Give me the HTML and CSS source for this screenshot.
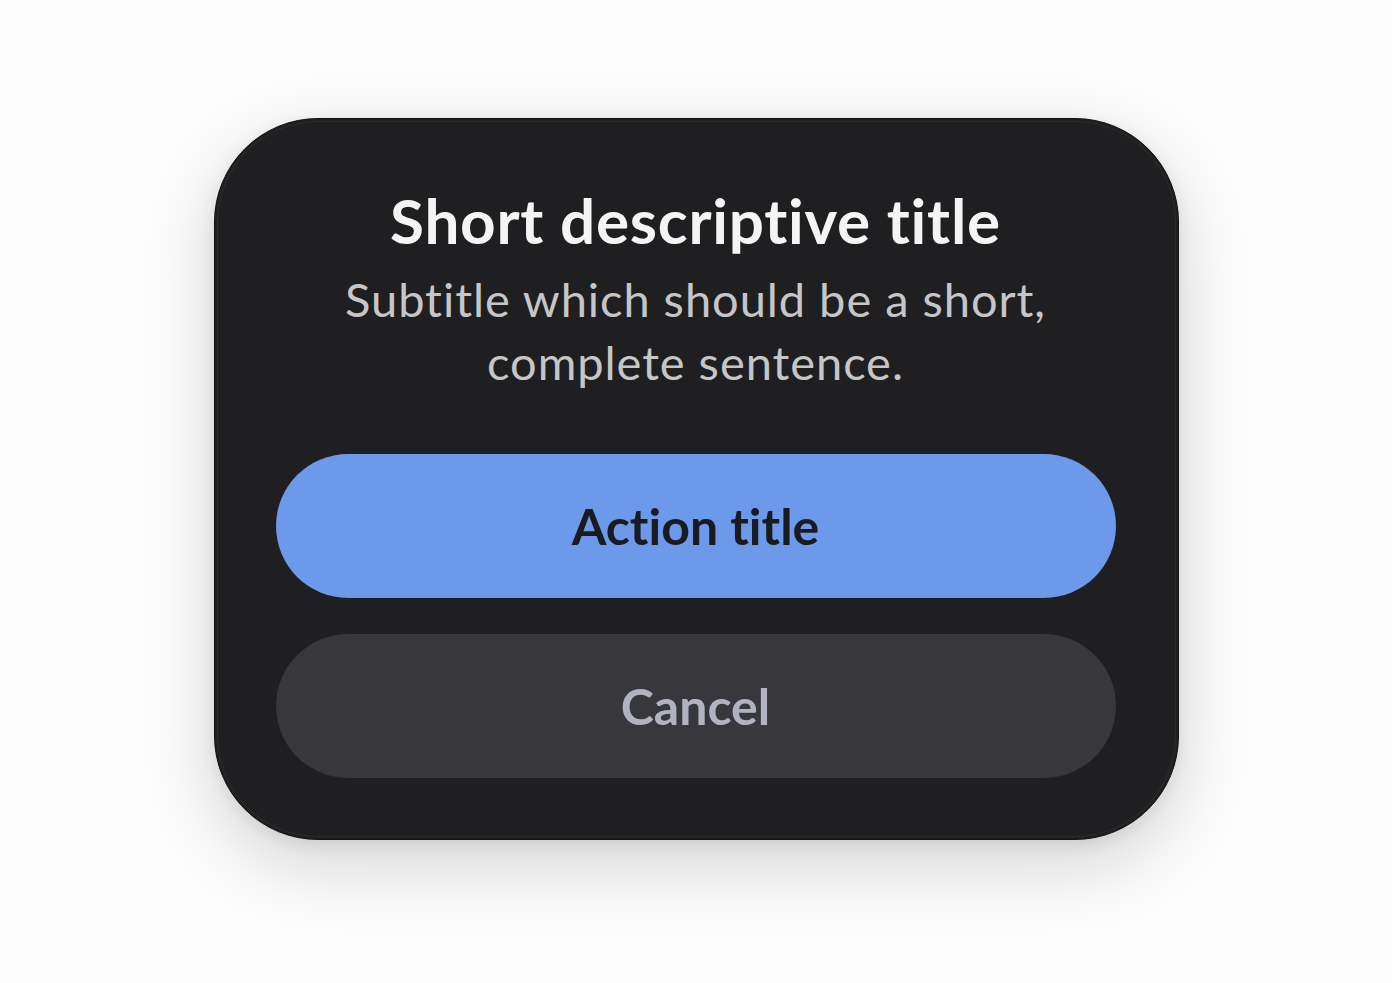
FILE: index.html
```html
<!DOCTYPE html>
<html>
<head>
<meta charset="utf-8">
<link rel="stylesheet" href="styles.css">
</head>
<body>
<div class="stage">
  <div class="card">
    <div class="texts">
      <h1 class="title">Short descriptive title</h1>
      <p class="subtitle">Subtitle which should be a short,<br>complete sentence.</p>
    </div>
    <div class="actions">
      <button class="btn btn-primary">Action title</button>
      <button class="btn btn-secondary">Cancel</button>
    </div>
  </div>
</div>
</body>
</html>
```
FILE: styles.css
```css
html, body {
  margin: 0;
  padding: 0;
  background: #fcfcfc;
  font-family: Lato, "Open Sans", sans-serif;
  font-variant-ligatures: none;
}
.stage {
  width: 1392px;
  height: 983px;
  display: flex;
  justify-content: center;
  align-items: flex-start;
  padding-top: 118px;
  box-sizing: border-box;
}
.card {
  width: 965px;
  height: 722px;
  box-sizing: border-box;
  background: #1f1f21;
  border: 1px solid #131314;
  border-radius: 104px;
  box-shadow: inset 0 0 0 2px #1f1f21, inset 0 0 0 3px #2c2c2e, 0 24px 70px rgba(0,0,0,0.16), 0 4px 16px rgba(0,0,0,0.08);
  padding: 61px 62px 61px 61px;
  display: flex;
  flex-direction: column;
  justify-content: space-between;
}
.texts {
  text-align: center;
}
.title {
  margin: 0;
  font-size: 62px;
  font-weight: 700;
  color: #f4f4f4;
  line-height: 80px;
  letter-spacing: 0.75px;
}
.subtitle {
  margin: 8px 0 0;
  font-size: 47px;
  font-weight: 400;
  color: #c6c6c8;
  line-height: 63px;
  letter-spacing: 0.95px;
}
.actions {
  display: flex;
  flex-direction: column;
  gap: 36px;
}
.btn {
  height: 144px;
  border: none;
  border-radius: 72px;
  font-family: Lato, "Open Sans", sans-serif;
  font-variant-ligatures: none;
  font-size: 50px;
  font-weight: 700;
  padding: 0;
}
.btn-primary {
  background: #6d99ea;
  color: #1a1b20;
}
.btn-secondary {
  background: #38373c;
  color: #b1b3c0;
}
```
